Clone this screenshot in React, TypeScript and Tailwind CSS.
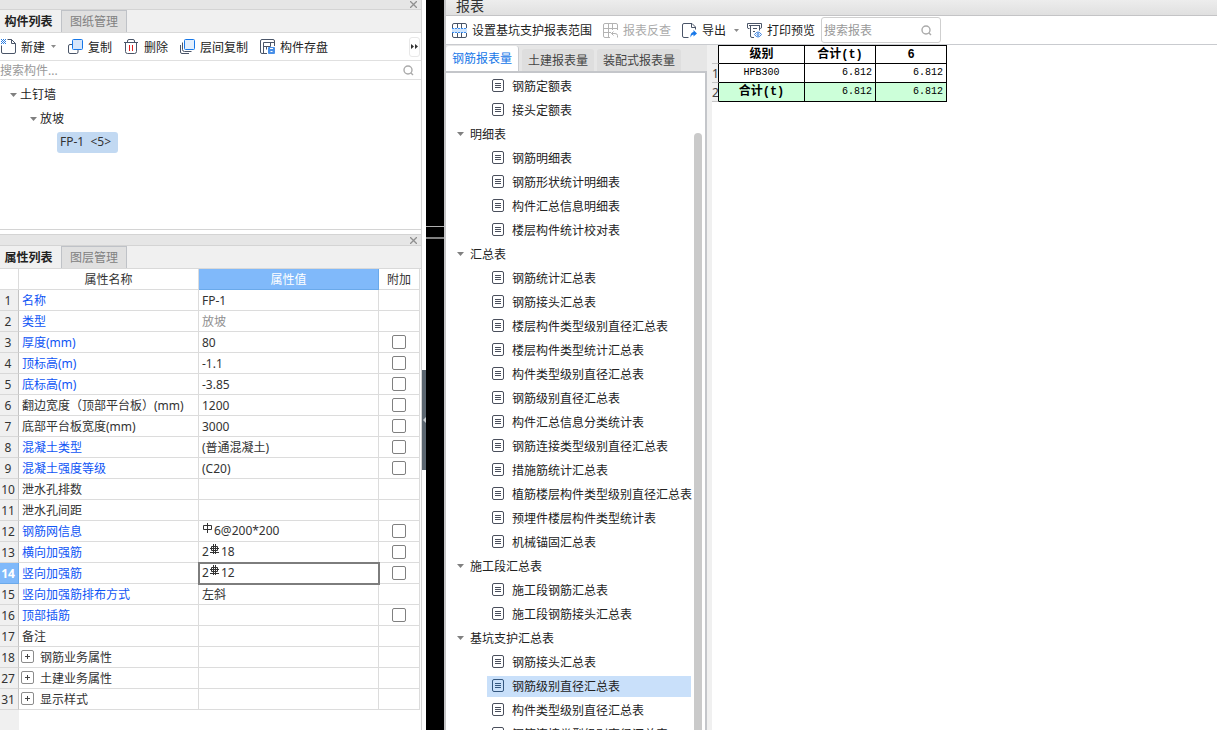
import React, { ReactNode } from "react";

type Property = {
  no: number;
  name: string;
  value?: ReactNode;
  plain?: boolean;
  group?: boolean;
  muted?: boolean;
  active?: boolean;
  extra?: boolean;
};

const Rebar = ({ grade }: { grade: number }) => (
  <svg
    className="mx-px inline-block h-[12px] w-[10px] align-baseline"
    viewBox="0 0 10 12"
    fill="none"
    stroke="#333"
    strokeWidth="1"
  >
    {grade === 1 ? <path d="M.5 2.5h8v4h-8zM4.500 0v10" /> : <path d="M1.500 2.500h6v4h-6zM0 4.500h9M0 8.500h9M3.500 0v10M5.500 0v10" />}
  </svg>
);

const properties: Property[] = [
  { no: 1, name: "名称", value: "FP-1" },
  { no: 2, name: "类型", value: "放坡", muted: true },
  { no: 3, name: "厚度(mm)", value: "80", extra: true },
  { no: 4, name: "顶标高(m)", value: "-1.1", extra: true },
  { no: 5, name: "底标高(m)", value: "-3.85", extra: true },
  { no: 6, name: "翻边宽度（顶部平台板）(mm)", value: "1200", plain: true, extra: true },
  { no: 7, name: "底部平台板宽度(mm)", value: "3000", plain: true, extra: true },
  { no: 8, name: "混凝土类型", value: "(普通混凝土)", extra: true },
  { no: 9, name: "混凝土强度等级", value: "(C20)", extra: true },
  { no: 10, name: "泄水孔排数", plain: true },
  { no: 11, name: "泄水孔间距", plain: true },
  { no: 12, name: "钢筋网信息", value: <><Rebar grade={1} />6@200*200</>, extra: true },
  { no: 13, name: "横向加强筋", value: <>2<Rebar grade={3} />18</>, extra: true },
  { no: 14, name: "竖向加强筋", value: <>2<Rebar grade={3} />12</>, active: true, extra: true },
  { no: 15, name: "竖向加强筋排布方式", value: "左斜" },
  { no: 16, name: "顶部插筋", extra: true },
  { no: 17, name: "备注", plain: true },
  { no: 18, name: "钢筋业务属性", plain: true, group: true },
  { no: 27, name: "土建业务属性", plain: true, group: true },
  { no: 31, name: "显示样式", plain: true, group: true },
];

const reportGroups = [
  { title: "", items: ["钢筋定额表", "接头定额表"] },
  {
    title: "明细表",
    items: ["钢筋明细表", "钢筋形状统计明细表", "构件汇总信息明细表", "楼层构件统计校对表"],
  },
  {
    title: "汇总表",
    items: [
      "钢筋统计汇总表",
      "钢筋接头汇总表",
      "楼层构件类型级别直径汇总表",
      "楼层构件类型统计汇总表",
      "构件类型级别直径汇总表",
      "钢筋级别直径汇总表",
      "构件汇总信息分类统计表",
      "钢筋连接类型级别直径汇总表",
      "措施筋统计汇总表",
      "植筋楼层构件类型级别直径汇总表",
      "预埋件楼层构件类型统计表",
      "机械锚固汇总表",
    ],
  },
  { title: "施工段汇总表", items: ["施工段钢筋汇总表", "施工段钢筋接头汇总表"] },
  {
    title: "基坑支护汇总表",
    items: ["钢筋接头汇总表", "钢筋级别直径汇总表", "构件类型级别直径汇总表", "钢筋连接类型级别直径汇总表"],
  },
];

const Icon = ({ children, color = "#4a5568" }: { children: ReactNode; color?: string }) => (
  <svg className="h-[15px] w-[15px] shrink-0" viewBox="0 0 15 15" fill="none" stroke={color}>
    {children}
  </svg>
);

const NewIcon = () => (
  <Icon>
    <path d="M.5 6.500v6.500q0 1.500 1.500 1.500h11q1.500 0 1.500-1.500V4.500l-4-4H6.500M10.500.5v4h4" />
    <path d="M0 .5h5M0 2.500h5M0 4.500h5" stroke="#2b7de0" strokeDasharray="1 1" />
    <path d="M1 1.500h4M1 3.500h4" stroke="#2b7de0" strokeDasharray="1 1" />
  </Icon>
);

const CopyIcon = () => (
  <Icon>
    <path d="M4 5.500H2Q.5 5.500.5 7v6q0 1.500 1.500 1.500h6.500q1.500 0 1.500-1.500v-2" />
    <rect x="4.500" y=".5" width="10" height="10" rx="1" fill="#d6e6fb" stroke="#1677e8" />
  </Icon>
);

const TrashIcon = () => (
  <Icon>
    <path d="M0 3.500h14M3.500 3.500V2Q3.500.5 5 .5h4q1.500 0 1.500 1.500v1.500M1.500 3.500v9q0 2 2 2h7q2 0 2-2v-9" />
    <path d="M5.500 6v6M8.500 6v6" stroke="#e02020" />
  </Icon>
);

const LayerCopyIcon = () => (
  <Icon>
    <path d="M.5 6v7q0 1.500 1.500 1.500h7M2.500 3.500v7q0 2 2 2h7" />
    <rect x="4.500" y=".5" width="10" height="10" rx="1" fill="#e3effd" stroke="#1677e8" />
  </Icon>
);

const SaveIcon = () => (
  <Icon>
    <path d="M7 14.500H2Q.5 14.500.5 13V2Q.5.5 2 .5h11q1.500 0 1.500 1.500v5M3.500 14V3.500h11M3.500 7.500h7V3.500M6.500 7.500v3" />
    <rect x="8" y="8" width="7" height="7" rx="1" fill="#4a90e8" stroke="none" />
    <path d="M10 9.500h3M10.500 12.500h2" stroke="#fff" />
  </Icon>
);

const RangeIcon = () => (
  <Icon>
    <path d="M.5 5V2Q.5.5 2 .5h11q1.500 0 1.500 1.500v3M.5 10v3q0 1.500 1.500 1.500h11q1.500 0 1.500-1.500v-3M5.500.5V5M9.500.5V5M5.500 10v4.500M9.500 10v4.500" />
    <path d="M0 5h15v5H0z" fill="#cfe4fc" stroke="none" />
    <path d="M0 5.500h15M0 9.500h15" stroke="#3b8df0" strokeDasharray="2 1" />
  </Icon>
);

const CheckBackIcon = () => (
  <Icon color="#b3b3b3">
    <path d="M14.500 7V2q0-1.500-1.500-1.500H2Q.5.5.5 2v11q0 1.500 1.500 1.500h5M.5 5.500h14M.5 9.500H8M5.500.5v14M9.500.5V7" />
    <path d="M10.500 8.500l-2 2 2 2M8.500 10.500H12q2.500 0 2.500 2v2" />
  </Icon>
);

const ExportIcon = () => (
  <Icon>
    <path d="M6.500 14.500H2Q.5 14.500.5 13V2Q.5.5 2 .5h8l3.500 3.500v2.500M9.500.5V4.500h4" />
    <path d="M8.500 14.500q-.5-5 3-5.500V7l3.500 3.500-3.500 3v-2q-2 0-3 3z" fill="#1677e8" stroke="none" />
  </Icon>
);

const PrintIcon = () => (
  <Icon>
    <path d="M2.500 5.500H1Q.5 5.500.5 4V.5h14V4q0 1.500-1 1.500h-1M2 2.500h11M3.500 2.500V13q0 1.500 1.500 1.500h2M12.500 2.500V7.500M6 5.500h4M6 8.500h2" />
    <path d="M7.500 11.500q3.500-5 7 0-3.500 5-7 0z" stroke="#3b82e0" fill="#fff" />
    <circle cx="11" cy="11.500" r="1" stroke="#3b82e0" />
  </Icon>
);

const SearchIcon = () => (
  <svg className="h-[11px] w-[11px] shrink-0" viewBox="0 0 11 11" fill="none" stroke="#aaa" strokeWidth="1.400">
    <circle cx="5" cy="5" r="4" />
    <path d="M7.800 7.800 10 10" />
  </svg>
);

const ReportIcon = ({ selected }: { selected: boolean }) => (
  <svg className="h-[13px] w-3 shrink-0" viewBox="0 0 12 13" fill="none" stroke={selected ? "#34577f" : "#4a4f5c"}>
    <rect x=".5" y=".5" width="11" height="12" rx="1.500" />
    <path d="M3 4.500h6M3 6.500h6M3 8.500h6" />
  </svg>
);

const Caret = () => (
  <svg className="h-1 w-[7px] shrink-0" viewBox="0 0 7 4" fill="#808080">
    <path d="M0 0h7L3.500 4z" />
  </svg>
);

const SmallCaret = () => (
  <svg className="h-[3px] w-[5px] shrink-0" viewBox="0 0 5 3" fill="#8a8a8a">
    <path d="M0 0h5L2.500 3z" />
  </svg>
);

const ToolButton = ({ icon, label, disabled }: { icon: ReactNode; label: string; disabled?: boolean }) => (
  <button
    disabled={disabled}
    className="flex shrink-0 items-center gap-[5px] whitespace-nowrap text-[#222] disabled:text-[#aaa]"
  >
    {icon}
    <span className="pt-[2px]">{label}</span>
  </button>
);

const PanelHeader = ({ tabs, label }: { tabs: string[]; label: string }) => (
  <>
    <div className="flex h-[10px] items-center justify-end border-b border-[#d4d4d4] bg-[#e6e6e6] pr-1">
      <button aria-label={label}>
        <svg className="h-[7px] w-[7px]" viewBox="0 0 7 7" stroke="#909090" strokeWidth="1.300">
          <path d="M0 0l7 7M7 0L0 7" />
        </svg>
      </button>
    </div>
    <div className="flex h-[23px] border-b border-[#d9d9d9] bg-[#f0f0f0]">
      <button className="w-[62px] border-r border-[#bfc2c7] bg-[#f0f0f0] pt-px pr-2 pl-1 font-bold whitespace-nowrap text-[#222]">
        {tabs[0]}
      </button>
      <button className="w-[65px] border-t border-r border-[#bfc2c7] bg-[#e0e0e0] text-[#808080]">
        {tabs[1]}
      </button>
    </div>
  </>
);

const ComponentPanel = () => (
  <section className="shrink-0">
    <PanelHeader tabs={["构件列表", "图纸管理"]} label="关闭构件列表" />
    <div className="flex h-7 items-center gap-3 border-b border-[#e0e0e0] pl-px">
      <div className="flex items-center gap-[6px]">
        <ToolButton icon={<NewIcon />} label="新建" />
        <SmallCaret />
      </div>
      <ToolButton icon={<CopyIcon />} label="复制" />
      <ToolButton icon={<TrashIcon />} label="删除" />
      <ToolButton icon={<LayerCopyIcon />} label="层间复制" />
      <ToolButton icon={<SaveIcon />} label="构件存盘" />
      <button
        aria-label="更多"
        className="mr-px ml-auto flex h-5 w-[11px] items-center justify-center rounded-[3px] border border-[#e8e8e8]"
      >
        <svg className="h-[5px] w-[7px] shrink-0" viewBox="0 0 7 5" fill="#333">
          <path d="M0 0l3 2.500L0 5zM4 0l3 2.500L4 5z" />
        </svg>
      </button>
    </div>
    <div className="flex h-[19px] items-center border-b border-[#e0e0e0] pr-[7px]">
      <input
        aria-label="搜索构件"
        placeholder="搜索构件..."
        className="min-w-0 flex-1 pt-[2px] outline-none placeholder:text-[#999]"
      />
      <SearchIcon />
    </div>
    <ul className="h-[150px] border-b border-[#d4d4d4] pt-[3px] text-[#222]">
      <li className="flex h-6 items-center gap-[3px] pl-[10px]">
        <Caret />
        土钉墙
      </li>
      <li className="flex h-6 items-center gap-[3px] pl-[30px]">
        <Caret />
        放坡
      </li>
      <li className="flex h-6 items-start pt-px pl-[57px]">
        <span className="h-[21px] min-w-[61px] rounded-[3px] bg-[#c2d9f2] px-[3px] pt-[2px] whitespace-pre text-[#333]">
          {"FP-1  <5>"}
        </span>
      </li>
    </ul>
  </section>
);

const PropertyPanel = () => (
  <section className="mt-1 flex min-h-0 flex-1 flex-col border-t border-[#d4d4d4] bg-[#e6e6e6] pt-px">
    <PanelHeader tabs={["属性列表", "图层管理"]} label="关闭属性列表" />
    <div className="flex min-h-0 flex-1 flex-col bg-white">
      <table className="w-[420px] table-fixed border-separate border-spacing-0 text-[#333]">
        <colgroup>
          <col className="w-[19px]" />
          <col className="w-[180px]" />
          <col />
          <col className="w-[41px]" />
        </colgroup>
        <thead>
          <tr className="h-[21px]">
            <th className="border-r border-b border-[#dcdcdc] p-0" />
            <th className="border-r border-b border-[#dcdcdc] p-0 pt-[2px] font-normal">属性名称</th>
            <th className="border-r border-b border-[#6aa9ea] bg-[#80b9fa] p-0 pt-[2px] font-normal text-white">
              属性值
            </th>
            <th className="border-r border-b border-[#dcdcdc] p-0 pt-[2px] font-normal">附加</th>
          </tr>
        </thead>
        <tbody>
          {properties.map((item) => (
            <tr className="h-[21px]" key={item.no}>
              <td
                className={`border-r border-b p-0 pt-[2px] pr-[2px] text-center ${
                  item.active
                    ? "border-[#6aa9ea] bg-[#80b9fa] font-bold text-white"
                    : "border-r-[#c4c4c4] border-b-[#d8d8d8] bg-[#f0f0f0]"
                }`}
              >
                <div className="-mx-1">{item.no}</div>
              </td>
              <td
                className={`border-r border-b border-[#dcdcdc] p-0 pt-[2px] whitespace-nowrap ${
                  item.plain ? "" : "text-[#0f55f5]"
                } ${item.group ? "pl-[2px]" : "pl-[3px]"}`}
              >
                {item.group ? (
                  <div className="flex items-start gap-[6px]">
                    <button
                      aria-label={`展开${item.name}`}
                      className="flex h-[13px] w-[13px] items-center justify-center rounded-[2px] border border-[#8c8c8c]"
                    >
                      <svg className="h-[5px] w-[5px]" viewBox="0 0 5 5" stroke="#444">
                        <path d="M0 2.500h5M2.500 0v5" />
                      </svg>
                    </button>
                    {item.name}
                  </div>
                ) : (
                  item.name
                )}
              </td>
              <td
                className={`border-r border-b border-[#dcdcdc] p-0 pl-[3px] ${
                  item.muted ? "text-[#909090]" : ""
                } ${item.active ? "outline-2 -outline-offset-1 outline-[#7d7d7d]" : ""} ${
                  typeof item.value === "string" ? "pt-[2px]" : ""
                }`}
              >
                {item.value}
              </td>
              <td className="border-r border-b border-[#dcdcdc] p-0">
                {item.extra && (
                  <input
                    type="checkbox"
                    aria-label={`附加${item.name}`}
                    className="mx-auto block h-[14px] w-[14px] appearance-none rounded-[2px] border border-[#808080]"
                  />
                )}
              </td>
            </tr>
          ))}
        </tbody>
      </table>
      <div className="w-[19px] flex-1 bg-[#f0f0f0]" />
    </div>
  </section>
);

const ReportTree = () => (
  <aside className="flex w-[261px] shrink-0 flex-col">
    <div className="flex h-[26px] shrink-0 items-end gap-[3px] bg-[#e6e6e6] text-[#444]">
      <button className="h-[25px] w-[73px] rounded-t-[3px] border-r border-[#c9cbcf] bg-white text-[#1677e8]">
        钢筋报表量
      </button>
      <button className="h-[22px] w-[72px] rounded-t-[3px] bg-[#dedede] pt-px">土建报表量</button>
      <button className="h-[22px] w-[84px] rounded-t-[3px] bg-[#dedede] pt-px">装配式报表量</button>
    </div>
    <div className="flex min-h-0 flex-1 border-t-2 border-r-2 border-[#c4c6ca] pt-px">
      <div className="min-w-0 flex-1 overflow-hidden text-[#222]">
        {reportGroups.map((group, g) => (
          <div key={g}>
            {group.title && (
              <div className="flex h-6 items-center gap-[6px] pl-[11px]">
                <Caret />
                <span className="pt-[2px]">{group.title}</span>
              </div>
            )}
            <ul>
              {group.items.map((item, i) => {
                const selected = g === 4 && i === 1;
                return (
                  <li key={item} className="flex h-6 items-start pt-[2px] pl-[41px]">
                    <a
                      href="#"
                      className={`mr-[3px] flex h-[21px] flex-1 items-start gap-2 pt-[3px] pl-[5px] whitespace-nowrap ${
                        selected ? "bg-[#c9e0fa]" : ""
                      }`}
                    >
                      <ReportIcon selected={selected} />
                      {item}
                    </a>
                  </li>
                );
              })}
            </ul>
          </div>
        ))}
      </div>
      <div className="mt-[59px] mr-[3px] w-2 rounded-t-full bg-[#cacaca]" />
    </div>
  </aside>
);

const cell = "border-r border-b border-black px-[3px] py-0";
const rowHead =
  "overflow-hidden border-r border-b border-b-[#c4c4c4] border-r-black bg-[#f0f0f0] p-0 pt-[2px] font-['Noto_Sans',sans-serif] text-xs text-[#444]";

const ReportTable = () => (
  <div className="min-w-0 flex-1 border-l-[5px] border-[#f0f0f0]">
    <table className="w-[235px] table-fixed border-separate border-spacing-0 font-['Liberation_Mono','Noto_Sans_CJK_SC',monospace] text-xs leading-4 text-black">
      <colgroup>
        <col className="w-[7px]" />
        <col className="w-[86px]" />
        <col className="w-[71px]" />
        <col className="w-[71px]" />
      </colgroup>
      <thead>
        <tr className="h-[19px]">
          <th className="border-r border-b border-b-[#c4c4c4] border-r-black bg-[#f0f0f0] p-0" />
          <th className={`${cell} border-t`}>级别</th>
          <th className={`${cell} border-t`}>合计(t)</th>
          <th className={`${cell} border-t`}>6</th>
        </tr>
      </thead>
      <tbody>
        <tr className="h-[19px] text-[10px]">
          <td className={rowHead}>1</td>
          <td className={`${cell} text-center`}>HPB300</td>
          <td className={`${cell} text-right`}>6.812</td>
          <td className={`${cell} text-right`}>6.812</td>
        </tr>
        <tr className="h-[19px] bg-[#ccffd9] text-[10px]">
          <td className={rowHead}>2</td>
          <td className={`${cell} text-center text-xs font-bold`}>合计(t)</td>
          <td className={`${cell} text-right`}>6.812</td>
          <td className={`${cell} text-right`}>6.812</td>
        </tr>
      </tbody>
    </table>
  </div>
);

const App = () => {
  return (
    <div className="flex h-screen overflow-hidden bg-white font-['Noto_Sans','Noto_Sans_CJK_SC',sans-serif] text-xs leading-4">
      <div className="flex w-[422px] shrink-0 flex-col border-r border-[#d4d4d4]">
        <ComponentPanel />
        <PropertyPanel />
      </div>
      <div className="w-1 shrink-0 pt-[370px]">
        <button aria-label="收起面板" className="flex h-[100px] w-full items-center bg-[#5b6670]">
          <svg className="h-[6px] w-1" viewBox="0 0 4 6" fill="#c8ccd0">
            <path d="M4 0v6L1 3z" />
          </svg>
        </button>
      </div>
      <div className="w-[18px] shrink-0 bg-black pt-[226px]">
        <div className="h-[13px] border-t border-b-2 border-t-[#b0b0b0] border-b-[#808080]" />
      </div>
      <main className="flex min-w-0 flex-1 flex-col border-l-2 border-[#c4c4c6]">
        <header className="flex h-4 shrink-0 items-start border-b border-[#c4c4c6] bg-linear-to-b from-[#ededed] to-[#e0e0e0] pl-[10px]">
          <h1 className="text-sm leading-3 text-[#333]">报表</h1>
        </header>
        <div className="flex h-[29px] shrink-0 items-center gap-[11px] border-b border-[#c9cbcf] pl-[6px]">
          <ToolButton icon={<RangeIcon />} label="设置基坑支护报表范围" />
          <ToolButton icon={<CheckBackIcon />} label="报表反查" disabled />
          <div className="flex items-center gap-2">
            <ToolButton icon={<ExportIcon />} label="导出" />
            <SmallCaret />
            <ToolButton icon={<PrintIcon />} label="打印预览" />
          </div>
          <label className="-ml-[5px] flex h-[26px] w-[120px] items-center rounded-[3px] border border-[#cfcfcf] pr-2 pl-[2px]">
            <input
              aria-label="搜索报表"
              placeholder="搜索报表"
              className="min-w-0 flex-1 pt-[2px] outline-none placeholder:text-[#999]"
            />
            <SearchIcon />
          </label>
        </div>
        <div className="flex min-h-0 flex-1">
          <ReportTree />
          <ReportTable />
        </div>
      </main>
    </div>
  );
};

export default App;
